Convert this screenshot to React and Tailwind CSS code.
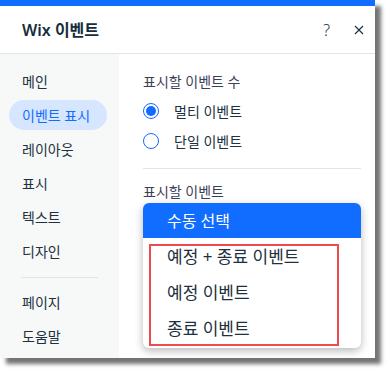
import React, { useState } from 'react';

const font = { fontFamily: '"Noto Sans", "Noto Sans CJK KR", sans-serif' };

const navItems = ['메인', '이벤트 표시', '레이아웃', '표시', '텍스트', '디자인'];
const navBottom = ['페이지', '도움말'];
const options = ['예정 + 종료 이벤트', '예정 이벤트', '종료 이벤트'];

const NavItem = ({ label, active }) => (
  <div className="h-[34px] flex items-center">
    <div
      className={`h-[30px] w-[98px] ml-[9px] pl-[13px] flex items-center rounded-full text-[14px] ${
        active ? 'bg-[#d6e6fe] text-[#116dff]' : 'text-[#20303c]'
      }`}
    >
      {label}
    </div>
  </div>
);

const Radio = ({ label, checked, onClick }) => (
  <div className="h-[30px] flex items-center cursor-pointer" onClick={onClick}>
    <div className="w-[16px] h-[16px] rounded-full border border-[#116dff] flex items-center justify-center bg-white">
      {checked && <div className="w-[10px] h-[10px] rounded-full bg-[#116dff]" />}
    </div>
    <span className="ml-[15px] text-[14px] text-[#20303c]">{label}</span>
  </div>
);

export default function App() {
  const [mode, setMode] = useState('multi');

  return (
    <div className="w-[390px] h-[374px] bg-white" style={font}>
      <div className="w-[375px] h-[358px] bg-white flex flex-col shadow-[6px_6px_4px_rgba(0,0,0,0.55)]">
        <div className="h-[6px] bg-[#116dff]" />
        <div className="h-[48px] flex items-center px-[22px] border-b border-[#dfe5eb]">
          <span className="text-[16px] font-semibold text-[#162d3d]">Wix 이벤트</span>
          <div className="ml-auto flex items-center text-[#162d3d]">
            <span className="text-[16px] leading-none font-light">?</span>
            <svg width="10" height="10" viewBox="0 0 10 10" className="ml-[24px] mr-[-11px]">
              <path d="M1 1L9 9M9 1L1 9" stroke="#162d3d" strokeWidth="1.1" />
            </svg>
          </div>
        </div>
        <div className="flex flex-1 min-h-0">
          <div className="w-[119px] bg-[#f7f8f8] pt-[10px]">
            {navItems.map((n) => (
              <NavItem key={n} label={n} active={n === '이벤트 표시'} />
            ))}
            <div className="mx-[21px] mt-[9px] mb-[7px] h-px bg-[#dfe5eb]" />
            {navBottom.map((n) => (
              <NavItem key={n} label={n} />
            ))}
          </div>
          <div className="flex-1 pl-[24px] pr-[14px] pt-[17px]">
            <div className="h-[20px] flex items-center text-[14px] text-[#3b4057]">표시할 이벤트 수</div>
            <div className="mt-[5px]">
              <Radio label="멀티 이벤트" checked={mode === 'multi'} onClick={() => setMode('multi')} />
              <Radio label="단일 이벤트" checked={mode === 'single'} onClick={() => setMode('single')} />
            </div>
            <div className="mt-[12px] h-px bg-[#dfe5eb]" />
            <div className="mt-[12px] h-[20px] flex items-center text-[14px] text-[#3b4057]">표시할 이벤트</div>
            <div className="relative mt-[2px] rounded-[6px] bg-white shadow-[0_3px_8px_rgba(0,0,0,0.28)]">
              <div className="h-[35px] rounded-t-[6px] bg-[#116dff] flex items-center pl-[24px] text-[16px] text-white">
                수동 선택
              </div>
              <div className="pt-[1px] pb-[1px]">
                {options.map((o) => (
                  <div key={o} className="h-[36px] flex items-center pl-[24px] text-[17px] text-[#20303c]">
                    {o}
                  </div>
                ))}
              </div>
              <div className="absolute left-[6px] top-[41px] w-[190px] h-[102px] border-2 border-[#ef4a4f] pointer-events-none" />
            </div>
          </div>
        </div>
      </div>
    </div>
  );
}
